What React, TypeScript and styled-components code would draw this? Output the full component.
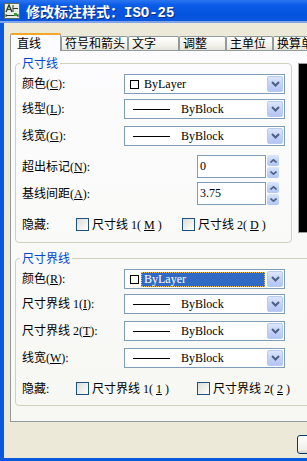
import React from 'react';
import styled, { createGlobalStyle } from 'styled-components';

const GlobalStyle = createGlobalStyle`
  html, body {
    margin: 0;
    padding: 0;
    background: #ECE9D8;
  }
  body {
    font-family: "Liberation Serif", "Noto Sans CJK SC", serif;
    font-size: 12px;
    color: #000;
  }
`;

const Window = styled.div`
  width: 307px;
  height: 461px;
  overflow: hidden;
  display: flex;
  flex-direction: column;
  background: #ECE9D8;
`;

const TitleBar = styled.div`
  flex: none;
  height: 21px;
  display: flex;
  align-items: center;
  gap: 6px;
  padding-left: 4px;
  background: linear-gradient(#2B75F0, #0A5BE6 25%, #0553DD 75%, #0B58DE);
  border-bottom: 2px solid #7FA4E8;
  color: #fff;
  font: bold 14px "Liberation Mono", "Noto Sans CJK SC", monospace;
  text-shadow: 1px 1px 0 #0A2A8A;
  white-space: nowrap;
`;

const Body = styled.div`
  flex: 1;
  display: flex;
  flex-direction: column;
  border-left: 4px solid #0A58DE;
  border-bottom: 3px solid #0A58DE;
  padding: 10px 0 0 6px;
  min-height: 0;
`;

const TabStrip = styled.div`
  flex: none;
  height: 17px;
  display: flex;
  align-items: flex-end;
  position: relative;
  z-index: 1;
`;

const Tab = styled.div<{ $w: number; $active?: boolean }>`
  flex: none;
  box-sizing: border-box;
  width: ${p => p.$w}px;
  height: ${p => (p.$active ? 18 : 14)}px;
  margin-bottom: ${p => (p.$active ? -1 : 0)}px;
  padding-left: ${p => (p.$active ? 6 : 3)}px;
  padding-top: ${p => (p.$active ? 2 : 0)}px;
  border: 1px solid #919B9C;
  border-bottom: none;
  border-top: ${p => (p.$active ? '2px solid #F5A623' : '1px solid #919B9C')};
  border-radius: 2px 2px 0 0;
  background: ${p => (p.$active ? '#FCFCFE' : 'linear-gradient(#FFFFFF, #F3F2EC 60%, #E6E4DA)')};
  font-family: "Noto Sans CJK SC", sans-serif;
  line-height: 12px;
  white-space: nowrap;
`;

const Panel = styled.div`
  flex: none;
  box-sizing: border-box;
  width: 420px;
  height: 372px;
  border: 1px solid #919B9C;
  background: linear-gradient(#FCFCFE, #F7F7F3);
  padding: 5px 0 0 4px;
  display: flex;
  flex-direction: column;
  gap: 8px;
`;

const TopRow = styled.div`
  display: flex;
  align-items: flex-start;
  gap: 6px;
`;

const GroupBox = styled.fieldset<{ $w: number; $pb: number }>`
  box-sizing: border-box;
  width: ${p => p.$w}px;
  min-width: 0;
  margin: 0;
  padding: 0 6px ${p => p.$pb}px;
  border: 1px solid #D0D0BF;
  border-radius: 4px;
  display: flex;
  flex-direction: column;
`;

const GroupTitle = styled.legend`
  color: #0046D5;
  padding: 0 2px;
  margin-left: -2px;
  font-family: "Noto Sans CJK SC", sans-serif;
  font-size: 12px;
  line-height: 14px;
`;

const Row = styled.div<{ $top: number; $h: number }>`
  display: flex;
  align-items: center;
  height: ${p => p.$h}px;
  margin-top: ${p => p.$top}px;
`;

const Label = styled.div<{ $w: number }>`
  flex: none;
  width: ${p => p.$w}px;
  white-space: nowrap;
  line-height: 14px;
`;

const Key = styled.span`
  text-decoration: underline;
`;

const ComboBox = styled.div`
  flex: none;
  box-sizing: border-box;
  width: 161px;
  height: 20px;
  border: 1px solid #7F9DB9;
  background: #fff;
  display: flex;
  align-items: center;
`;

const ComboValue = styled.div<{ $pad: number }>`
  flex: 1;
  display: flex;
  align-items: center;
  padding-left: ${p => p.$pad}px;
  height: 100%;
  white-space: nowrap;
`;

const Swatch = styled.span`
  flex: none;
  box-sizing: border-box;
  width: 9px;
  height: 9px;
  border: 1px solid #000;
  background: #fff;
  margin-right: 2px;
`;

const LineSample = styled.span`
  flex: none;
  width: 37px;
  height: 1px;
  background: #000;
  margin-right: 8px;
`;

const ValueText = styled.span<{ $sel?: boolean }>`
  flex: ${p => (p.$sel ? 1 : 'none')};
  box-sizing: border-box;
  height: 15px;
  line-height: 13px;
  padding-left: 2px;
  margin-right: ${p => (p.$sel ? 2 : 0)}px;
  background: ${p => (p.$sel ? '#316AC5' : 'transparent')};
  color: ${p => (p.$sel ? '#fff' : '#000')};
  border: 1px ${p => (p.$sel ? 'dotted #F0C060' : 'solid transparent')};
`;

const DropButton = styled.div`
  flex: none;
  box-sizing: border-box;
  width: 16px;
  height: 16px;
  margin-right: 1px;
  border: 1px solid #B7CAF1;
  border-radius: 2px;
  background: linear-gradient(#DCE6FC, #C3D3F8 50%, #B2C6F4);
  display: flex;
  align-items: center;
  justify-content: center;
`;

const Spinner = styled.div`
  flex: none;
  display: flex;
  gap: 1px;
  height: 23px;
`;

const SpinText = styled.div`
  box-sizing: border-box;
  width: 69px;
  height: 100%;
  border: 1px solid #7F9DB9;
  background: #fff;
  padding: 3px 0 0 2px;
  line-height: 14px;
`;

const SpinButtons = styled.div`
  width: 12px;
  display: flex;
  flex-direction: column;
  gap: 1px;
`;

const SpinButton = styled.div`
  flex: 1;
  border-radius: 2px;
  background: linear-gradient(#DCE6FC, #C3D3F8 50%, #B2C6F4);
  display: flex;
  align-items: center;
  justify-content: center;
`;

const CheckItem = styled.div<{ $w?: number }>`
  flex: none;
  width: ${p => (p.$w ? `${p.$w}px` : 'auto')};
  display: flex;
  align-items: center;
  gap: 3px;
  white-space: nowrap;
  line-height: 14px;
`;

const CheckBox = styled.span`
  flex: none;
  box-sizing: border-box;
  width: 13px;
  height: 13px;
  border: 1px solid #1C5180;
  background: linear-gradient(135deg, #DCDCD7, #FFFFFF);
`;

const Preview = styled.div`
  flex: none;
  box-sizing: border-box;
  width: 120px;
  height: 170px;
  margin-top: 7px;
  border: 1px solid #9D9D9D;
  background: #000;
`;

const Footer = styled.div`
  flex: 1;
  display: flex;
  align-items: flex-start;
  padding: 13px 0 0 287px;
`;

const Button = styled.div`
  flex: none;
  box-sizing: border-box;
  width: 75px;
  height: 19px;
  border: 1px solid #003C74;
  border-radius: 3px;
  background: linear-gradient(#FFFFFF, #F0F0EA 80%, #D6D0C5);
`;

const Chevron = () => (
  <svg width="9" height="6" viewBox="0 0 9 6">
    <path d="M1 1 L4.5 4.5 L8 1" fill="none" stroke="#4D6185" strokeWidth="2" />
  </svg>
);

const SpinArrow = ({ up }: { up?: boolean }) => (
  <svg width="7" height="4" viewBox="0 0 7 4">
    <path d={up ? 'M0.5 3.5 L3.5 0.8 L6.5 3.5' : 'M0.5 0.5 L3.5 3.2 L6.5 0.5'} fill="none" stroke="#4D6185" strokeWidth="1.6" />
  </svg>
);

const TitleIcon = () => (
  <svg width="16" height="16" viewBox="0 0 16 16">
    <rect x="0.5" y="0.5" width="15" height="15" fill="#E9EEE4" stroke="#5A6B5A" />
    <path d="M2 9 L5 2 L8 9" fill="none" stroke="#2E3E2E" strokeWidth="1.4" />
    <path d="M3 6.5 H7" stroke="#2E3E2E" strokeWidth="1" />
    <path d="M9 2 V9 M9 5.5 H14" stroke="#2E3E2E" strokeWidth="1" />
    <path d="M2 12.5 H14 M2 11 V14 M14 11 V14" stroke="#2E3E2E" strokeWidth="1" />
    <rect x="10" y="10" width="3" height="3" fill="#3B9C3B" />
  </svg>
);

function Combo({ kind, value, selected }: { kind: 'color' | 'line'; value: string; selected?: boolean }) {
  return (
    <ComboBox>
      <ComboValue $pad={kind === 'color' ? 5 : 8}>
        {kind === 'color' ? <Swatch /> : <LineSample />}
        <ValueText $sel={selected}>{value}</ValueText>
      </ComboValue>
      <DropButton>
        <Chevron />
      </DropButton>
    </ComboBox>
  );
}

function Spin({ value }: { value: string }) {
  return (
    <Spinner>
      <SpinText>{value}</SpinText>
      <SpinButtons>
        <SpinButton><SpinArrow up /></SpinButton>
        <SpinButton><SpinArrow /></SpinButton>
      </SpinButtons>
    </Spinner>
  );
}

const tabs = [
  { name: '直线', w: 51, active: true },
  { name: '符号和箭头', w: 67 },
  { name: '文字', w: 51 },
  { name: '调整', w: 47 },
  { name: '主单位', w: 47 },
  { name: '换算单位', w: 60 },
];

export default function App() {
  return (
    <>
      <GlobalStyle />
      <Window>
        <TitleBar>
          <TitleIcon />
          <span>修改标注样式：ISO-25</span>
        </TitleBar>
        <Body>
          <TabStrip>
            {tabs.map(t => (
              <Tab key={t.name} $w={t.w} $active={t.active}>{t.name}</Tab>
            ))}
          </TabStrip>
          <Panel>
            <TopRow>
              <GroupBox $w={277} $pb={10}>
                <GroupTitle>尺寸线</GroupTitle>
                <Row $top={4} $h={20}>
                  <Label $w={102}>颜色(<Key>C</Key>):</Label>
                  <Combo kind="color" value="ByLayer" />
                </Row>
                <Row $top={5} $h={20}>
                  <Label $w={102}>线型(<Key>L</Key>):</Label>
                  <Combo kind="line" value="ByBlock" />
                </Row>
                <Row $top={7} $h={20}>
                  <Label $w={102}>线宽(<Key>G</Key>):</Label>
                  <Combo kind="line" value="ByBlock" />
                </Row>
                <Row $top={9} $h={23}>
                  <Label $w={175}>超出标记(<Key>N</Key>):</Label>
                  <Spin value="0" />
                </Row>
                <Row $top={4} $h={23}>
                  <Label $w={175}>基线间距(<Key>A</Key>):</Label>
                  <Spin value="3.75" />
                </Row>
                <Row $top={12} $h={15}>
                  <Label $w={54}>隐藏:</Label>
                  <CheckItem $w={106}><CheckBox />尺寸线 1(<Key>M</Key>)</CheckItem>
                  <CheckItem><CheckBox />尺寸线 2(<Key>D</Key>)</CheckItem>
                </Row>
              </GroupBox>
              <Preview />
            </TopRow>
            <GroupBox $w={400} $pb={9}>
              <GroupTitle>尺寸界线</GroupTitle>
              <Row $top={4} $h={20}>
                <Label $w={102}>颜色(<Key>R</Key>):</Label>
                <Combo kind="color" value="ByLayer" selected />
              </Row>
              <Row $top={5} $h={20}>
                <Label $w={102}>尺寸界线 1(<Key>I</Key>):</Label>
                <Combo kind="line" value="ByBlock" />
              </Row>
              <Row $top={7} $h={20}>
                <Label $w={102}>尺寸界线 2(<Key>T</Key>):</Label>
                <Combo kind="line" value="ByBlock" />
              </Row>
              <Row $top={7} $h={20}>
                <Label $w={102}>线宽(<Key>W</Key>):</Label>
                <Combo kind="line" value="ByBlock" />
              </Row>
              <Row $top={13} $h={15}>
                <Label $w={54}>隐藏:</Label>
                <CheckItem $w={121}><CheckBox />尺寸界线 1(<Key>1</Key>)</CheckItem>
                <CheckItem><CheckBox />尺寸界线 2(<Key>2</Key>)</CheckItem>
              </Row>
            </GroupBox>
          </Panel>
          <Footer>
            <Button />
          </Footer>
        </Body>
      </Window>
    </>
  );
}
